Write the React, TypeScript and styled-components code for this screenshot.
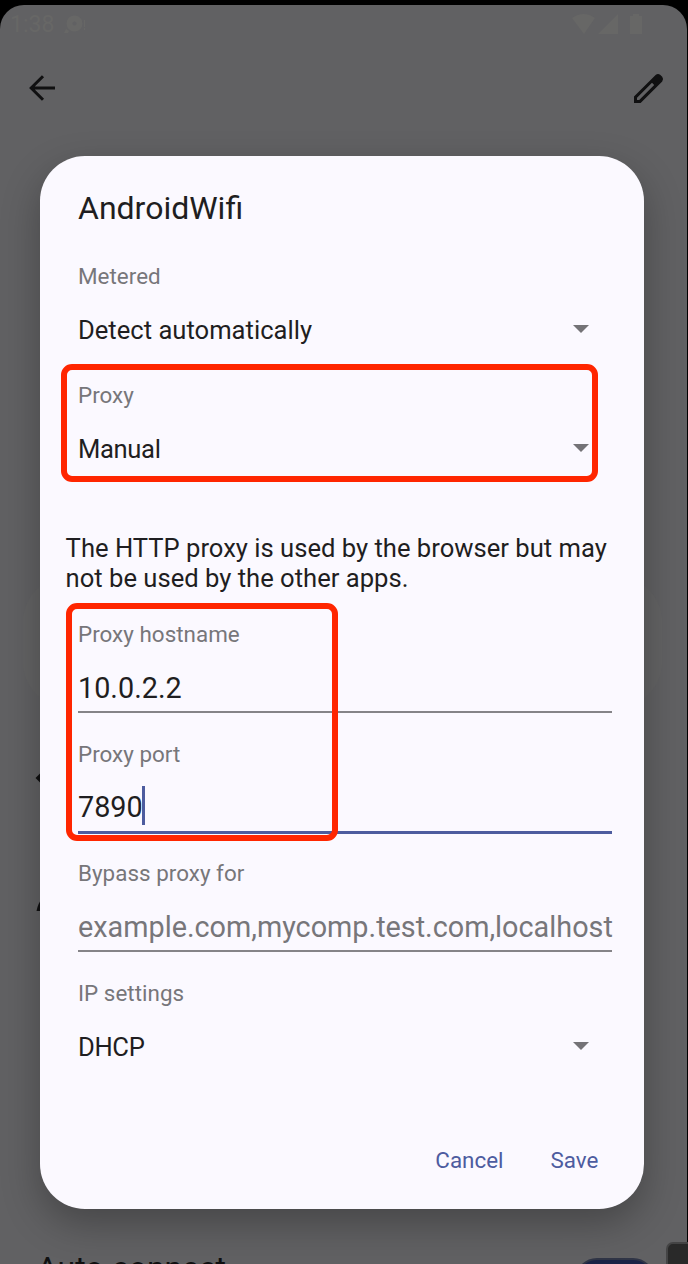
import React from "react";
import styled, { createGlobalStyle } from "styled-components";

const GlobalStyle = createGlobalStyle`
  * { box-sizing: border-box; }
  body { margin: 0; background: #000; font-family: Roboto, "Liberation Sans", sans-serif; }
`;

const Device = styled.div`
  position: relative;
  width: 688px;
  height: 1264px;
  padding: 5px 1px 0 0;
  background: #000;
  overflow: hidden;
`;

const Screen = styled.div`
  display: flex;
  flex-direction: column;
  height: 1259px;
  background: #616163;
  border-radius: 24px 24px 0 0;
  overflow: hidden;
`;

const StatusBar = styled.div`
  display: flex;
  flex: none;
  align-items: center;
  justify-content: space-between;
  height: 38px;
  padding: 0 44px 0 10px;
  color: #676766;
  font-size: 23px;
`;

const StatusGroup = styled.div<{ $gap: number }>`
  display: flex;
  align-items: center;
  gap: ${(p) => p.$gap}px;
`;

const AppBar = styled.div`
  display: flex;
  flex: none;
  align-items: center;
  justify-content: space-between;
  height: 90px;
  padding: 0 23px 0 28px;
`;

const SignalCard = styled.div`
  flex: none;
  height: 132px;
  margin: 443px 25px 0 23px;
  border-radius: 46px;
  background: #636364;
`;

const Hints = styled.div`
  display: flex;
  flex: none;
  flex-direction: column;
  gap: 113px;
  padding: 64px 0 0 35px;
`;

const AutoConnect = styled.div`
  display: flex;
  flex: none;
  justify-content: space-between;
  margin-top: 338px;
  padding: 0 32px 0 37px;
  font-size: 32px;
  line-height: 38px;
  letter-spacing: -0.1px;
  color: #101011;
`;

const Toggle = styled.div`
  flex: none;
  width: 80px;
  height: 44px;
  margin-top: 9px;
  border-radius: 22px;
  border: 2px solid #303546;
  background: #1b2347;
`;

const CornerPanel = styled.div`
  position: absolute;
  right: -8px;
  bottom: -8px;
  width: 30px;
  height: 30px;
  border: 2px solid #444445;
  border-radius: 7px;
  background: #292929;
`;

const Dialog = styled.section`
  position: absolute;
  left: 40px;
  top: 156px;
  width: 604px;
  height: 1053px;
  display: flex;
  flex-direction: column;
  padding: 33px 32px 0 38px;
  border-radius: 45px;
  background: #fbf9ff;
  box-shadow: 0 15px 38px rgba(0, 0, 0, 0.28);
  color: #1f1e21;
`;

const Title = styled.h1`
  margin: 0 0 36px;
  font-size: 32px;
  line-height: 38px;
  font-weight: 400;
`;

const FieldBox = styled.div<{ $h: number }>`
  flex: none;
  height: ${(p) => p.$h}px;
`;

const Label = styled.div`
  font-size: 22.4px;
  line-height: 26px;
  letter-spacing: 0.03px;
  color: #77767a;
`;

const SelectRow = styled.div<{ $tight?: boolean }>`
  display: flex;
  align-items: center;
  justify-content: space-between;
  margin-top: 26px;
  padding-right: 23.5px;
  font-size: 25.6px;
  line-height: 30px;
  letter-spacing: ${(p) => (p.$tight ? -0.35 : 0)}px;
`;

const Entry = styled.div<{ $hint?: boolean; $focused?: boolean }>`
  display: flex;
  align-items: center;
  height: ${(p) => (p.$focused ? 45 : 44)}px;
  margin-top: 22px;
  padding-bottom: 5px;
  border-bottom: ${(p) => (p.$focused ? "3px solid #4d5c9f" : "2px solid #858488")};
  font-size: 28.8px;
  line-height: 34px;
  white-space: nowrap;
  color: ${(p) => (p.$hint ? "#77767a" : "#1f1e21")};
`;

const Caret = styled.span`
  width: 3px;
  height: 39px;
  margin: -3px 0 0 -1px;
  background: #4d5c9f;
`;

const Notice = styled.p`
  margin: 32px 0 28px -12.4px;
  font-size: 25.6px;
  line-height: 30px;
  white-space: nowrap;
`;

const Actions = styled.div`
  display: flex;
  justify-content: flex-end;
  gap: 47px;
  margin-top: 48px;
  padding-right: 13.6px;
`;

const TextButton = styled.button`
  padding: 0;
  border: 0;
  background: none;
  font: 400 22.4px/26px Roboto, "Liberation Sans", sans-serif;
  color: #4d5c9f;
`;

const Highlight = styled.div<{ $x: number; $y: number; $w: number; $h: number }>`
  position: absolute;
  left: ${(p) => p.$x}px;
  top: ${(p) => p.$y}px;
  width: ${(p) => p.$w}px;
  height: ${(p) => p.$h}px;
  border: 6px solid #ff2600;
  border-radius: 11px;
`;

const ArrowIcon = styled.svg`
  flex: none;
  margin-bottom: 2px;
`;

const Arrow = () => (
  <ArrowIcon width="16" height="8" viewBox="0 0 16 8">
    <path d="M0 0H16L8 8Z" fill="#747377" />
  </ArrowIcon>
);

function SelectField({ label, value, tight }: { label: string; value: string; tight?: boolean }) {
  return (
    <FieldBox $h={119}>
      <Label>{label}</Label>
      <SelectRow $tight={tight}>
        {value}
        <Arrow />
      </SelectRow>
    </FieldBox>
  );
}

function TextField(props: { label: string; value: string; hint?: boolean; focused?: boolean }) {
  return (
    <FieldBox $h={119.7}>
      <Label>{props.label}</Label>
      <Entry $hint={props.hint} $focused={props.focused}>
        {props.value}
        {props.focused && <Caret />}
      </Entry>
    </FieldBox>
  );
}

export default function App() {
  return (
    <>
      <GlobalStyle />
      <Device>
        <Screen>
          <StatusBar>
            <StatusGroup $gap={10}>
              <span>1:38</span>
              <svg width="23" height="19" viewBox="0 0 23 19" fill="#676766">
                <path fillRule="evenodd" d="M10.500 0.500a8 8 0 1 1 0 16a8 8 0 0 1 0-16ZM10.500 6.500a2 2 0 1 0 0 4a2 2 0 0 0 0-4Z" />
                <path d="M0 18l2-4 3 2-1 2ZM20 5h1v7h-1ZM20 13h1v2h-1Z" />
              </svg>
            </StatusGroup>
            <svg width="71" height="22" viewBox="0 0 71 22" fill="#676766">
              <path d="M0 5Q11.500-3 23 5L12 21ZM26 21L46 1V21ZM58 3h3V1h6v2h3v18H58Z" />
            </svg>
          </StatusBar>
          <AppBar>
            <svg width="28" height="28" viewBox="0 0 28 28" fill="none" stroke="#101011" strokeWidth="3">
              <path d="M27 14H3.500M15 2.200L3.200 14L15 25.800" />
            </svg>
            <svg width="31" height="31" viewBox="0 0 31 31">
              <path
                fillRule="evenodd"
                fill="#101011"
                d="M1 23.500L22.600 1.900Q25 0 27.400 1.900L29.200 3.700Q31 6 29.200 8.400L7.600 30H1ZM4 24.800V27H6.200L21.200 12L19 9.800Z"
              />
            </svg>
          </AppBar>
          <SignalCard />
          <Hints>
            <svg width="12" height="12" viewBox="0 0 12 12" fill="#101011">
              <path d="M0.500 6L6 0.500L11 6L6 11.500Z" />
            </svg>
            <svg width="12" height="14" viewBox="0 0 12 14" fill="#101011">
              <path d="M1.500 14Q3 6 7 2V14Z" />
            </svg>
          </Hints>
          <AutoConnect>
            Auto-connect
            <Toggle />
          </AutoConnect>
        </Screen>
        <CornerPanel />
        <Dialog>
          <Title>AndroidWifi</Title>
          <SelectField label="Metered" value="Detect automatically" />
          <SelectField label="Proxy" value="Manual" tight />
          <Notice>
            The HTTP proxy is used by the browser but may
            <br />
            not be used by the other apps.
          </Notice>
          <TextField label="Proxy hostname" value="10.0.2.2" />
          <TextField label="Proxy port" value="7890" focused />
          <TextField label="Bypass proxy for" value="example.com,mycomp.test.com,localhost" hint />
          <SelectField label="IP settings" value="DHCP" tight />
          <Actions>
            <TextButton>Cancel</TextButton>
            <TextButton>Save</TextButton>
          </Actions>
        </Dialog>
        <Highlight $x={61} $y={364} $w={537} $h={118} />
        <Highlight $x={66} $y={603} $w={272} $h={238} />
      </Device>
    </>
  );
}
